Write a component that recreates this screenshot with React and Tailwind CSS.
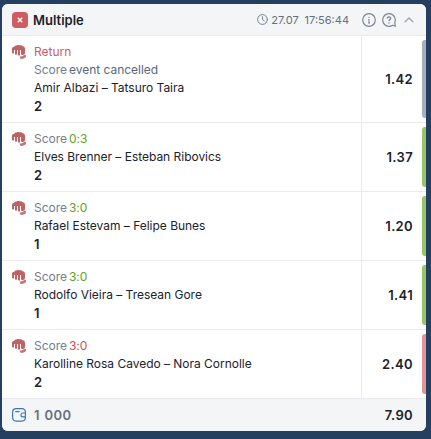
const bets = [
  { label: "Return", score: "event cancelled", fighters: "Amir Albazi – Tatsuro Taira", pick: "2", odds: "1.42", status: "cancelled" },
  { score: "0:3", fighters: "Elves Brenner – Esteban Ribovics", pick: "2", odds: "1.37", status: "won" },
  { score: "3:0", fighters: "Rafael Estevam – Felipe Bunes", pick: "1", odds: "1.20", status: "won" },
  { score: "3:0", fighters: "Rodolfo Vieira – Tresean Gore", pick: "1", odds: "1.41", status: "won" },
  { score: "3:0", fighters: "Karolline Rosa Cavedo – Nora Cornolle", pick: "2", odds: "2.40", status: "lost" },
];

const scoreColors = {
  cancelled: "text-[#5b6878]",
  won: "text-[#64a11c]",
  lost: "text-[#cd4f55]",
};

const barColors = {
  cancelled: "bg-[#a7afbd]",
  won: "bg-[#99c568]",
  lost: "bg-[#e09597]",
};

function FistIcon() {
  return (
    <svg width="14" height="14" viewBox="0 0 14 14" className="shrink-0" fill="#be6263">
      <path d="M0 4C0 2.6.8 2 2 2 2.4.9 3.4.3 4.6.5 5.4-.1 7-.1 7.8.4 9 0 10.2.4 10.6 1.2 12.2 1.2 13 2.4 13 4V7.6C13 8.9 12.3 9.7 11.2 10H9.8L9 9.2V5H8V9.8C8 11 6 11 6 9.8V5H5V9C5 10 3 10 3 9V5H2V8C2 8.8 0 8.8 0 7.6Z" />
      <path d="M7.4 11.4C9.4 11.8 11.3 11.2 12.6 9.6L14 10.2V11.8C12.8 13.5 10.6 14.2 8.4 13.8Z" fill="#c97576" />
    </svg>
  );
}

function ClockIcon() {
  return (
    <svg width="11" height="11" viewBox="0 0 11 11" fill="none" stroke="#788392" strokeLinecap="round">
      <circle cx="5.5" cy="5.5" r="4.9" />
      <path d="M5.5 2.7V5.6L7.3 6.9" />
    </svg>
  );
}

function InfoIcon() {
  return (
    <svg width="14" height="14" viewBox="0 0 14 14" fill="none" stroke="#7c8796" strokeWidth="1.2">
      <circle cx="7" cy="7" r="6.3" />
      <path d="M7 3.8V5M6.2 6.4H7V10M6 10H8" strokeWidth="1" />
    </svg>
  );
}

function HelpIcon() {
  return (
    <svg width="14" height="14" viewBox="0 0 14 14" fill="none" stroke="#7c8796" strokeWidth="1.2">
      <path d="M13.3 7A6.3 6.3 0 1 0 7 13.3 6.3 6.3 0 0 0 10.6 12.2L13.3 13.3 12.8 9.5A6.3 6.3 0 0 0 13.3 7Z" strokeLinejoin="round" />
      <path d="M5.3 5.5C5.3 3.4 8.7 3.4 8.7 5.3 8.7 6.6 7 6.6 7 8.1M7 9.2V10.4" strokeWidth="1.3" />
    </svg>
  );
}

function WalletIcon() {
  return (
    <svg width="14" height="14" viewBox="0 0 14 14" fill="none" stroke="#3f76b9" strokeWidth="1.2" strokeLinecap="round">
      <path d="M13.4 4.7V4.2C13.4 1.9 12.2.7 9.8.7H4.2C1.8.7.6 1.9.6 4.2V9.6C.6 11.9 1.8 13.1 4.2 13.1H9.8C12.2 13.1 13.4 11.9 13.4 9.6V9.1" />
      <path d="M13.4 5H10.8C8.3 5 8.3 8.8 10.8 8.8H13.4ZM3.7 3.7H7.2" />
    </svg>
  );
}

function BetRow({ bet }) {
  return (
    <div className="flex border-b border-[#e9ebf0]">
      <div className="flex flex-1 gap-2 py-[7px] pl-2.5">
        <div className="pt-0.5">
          <FistIcon />
        </div>
        <div className="text-xs leading-[18px] tracking-[-0.02px] text-[#1b222c]">
          {bet.label && <div className="text-[#c95f65]">{bet.label}</div>}
          <div className="text-[#737d8b]">
            Score<span className={`ml-0.5 ${scoreColors[bet.status]}`}>{bet.score}</span>
          </div>
          <div>{bet.fighters}</div>
          <div className="text-[13px] leading-[18px] font-semibold">{bet.pick}</div>
        </div>
      </div>
      <div className="flex w-[65px] border-l border-[#e9ebf0]">
        <div className="flex flex-1 items-center justify-end pt-0.5 pr-[9px] text-[13px] font-semibold tracking-[0.35px] text-[#1b222c]">
          {bet.odds}
        </div>
        <div className={`my-1 w-1 rounded-l-[3px] ${barColors[bet.status]}`} />
      </div>
    </div>
  );
}

export default function App() {
  return (
    <div className="h-[439px] w-[431px] bg-[#253f60] pt-1 pl-0.5 font-['Inter',sans-serif]">
      <div className="w-[424px] overflow-hidden rounded-md bg-white">
        {/* Header */}
        <div className="flex h-8 items-center border-b border-[#e9ebf0] bg-[#f3f5f7] pr-3 pl-2.5">
          <div className="flex size-4 items-center justify-center rounded-[4px] bg-[#cf5c60]">
            <svg width="6" height="6" viewBox="0 0 6 6" stroke="#fff" strokeWidth="1.4">
              <path d="M.8.8 5.2 5.2M5.2.8.8 5.2" />
            </svg>
          </div>
          <div className="ml-[5px] pt-0.5 text-[13px] font-semibold text-[#1b222c]">Multiple</div>
          <div className="ml-auto flex items-center text-[11px] text-[#657080]">
            <ClockIcon />
            <span className="ml-[3px] pt-px">27.07</span>
            <span className="ml-1.5 pt-px">17:56:44</span>
          </div>
          <div className="ml-[13px] flex items-center gap-1.5">
            <InfoIcon />
            <HelpIcon />
          </div>
          <svg className="ml-2" width="10" height="6" viewBox="0 0 10 6" fill="none" stroke="#a1a9b5" strokeWidth="1.4">
            <path d="M.7 5.3 5 1 9.3 5.3" />
          </svg>
        </div>

        {/* Events */}
        {bets.map((bet) => (
          <BetRow key={bet.fighters} bet={bet} />
        ))}

        {/* Stake and total odds */}
        <div className="flex h-8 items-center bg-[#f3f5f7] pr-[13px] pl-2.5 text-[13px] font-semibold">
          <WalletIcon />
          <span className="ml-2 pt-px tracking-[0.4px] text-[#657080] [word-spacing:1px]">1 000</span>
          <span className="ml-auto pt-px tracking-[0.35px] text-[#1b222c]">7.90</span>
        </div>
      </div>
    </div>
  );
}
